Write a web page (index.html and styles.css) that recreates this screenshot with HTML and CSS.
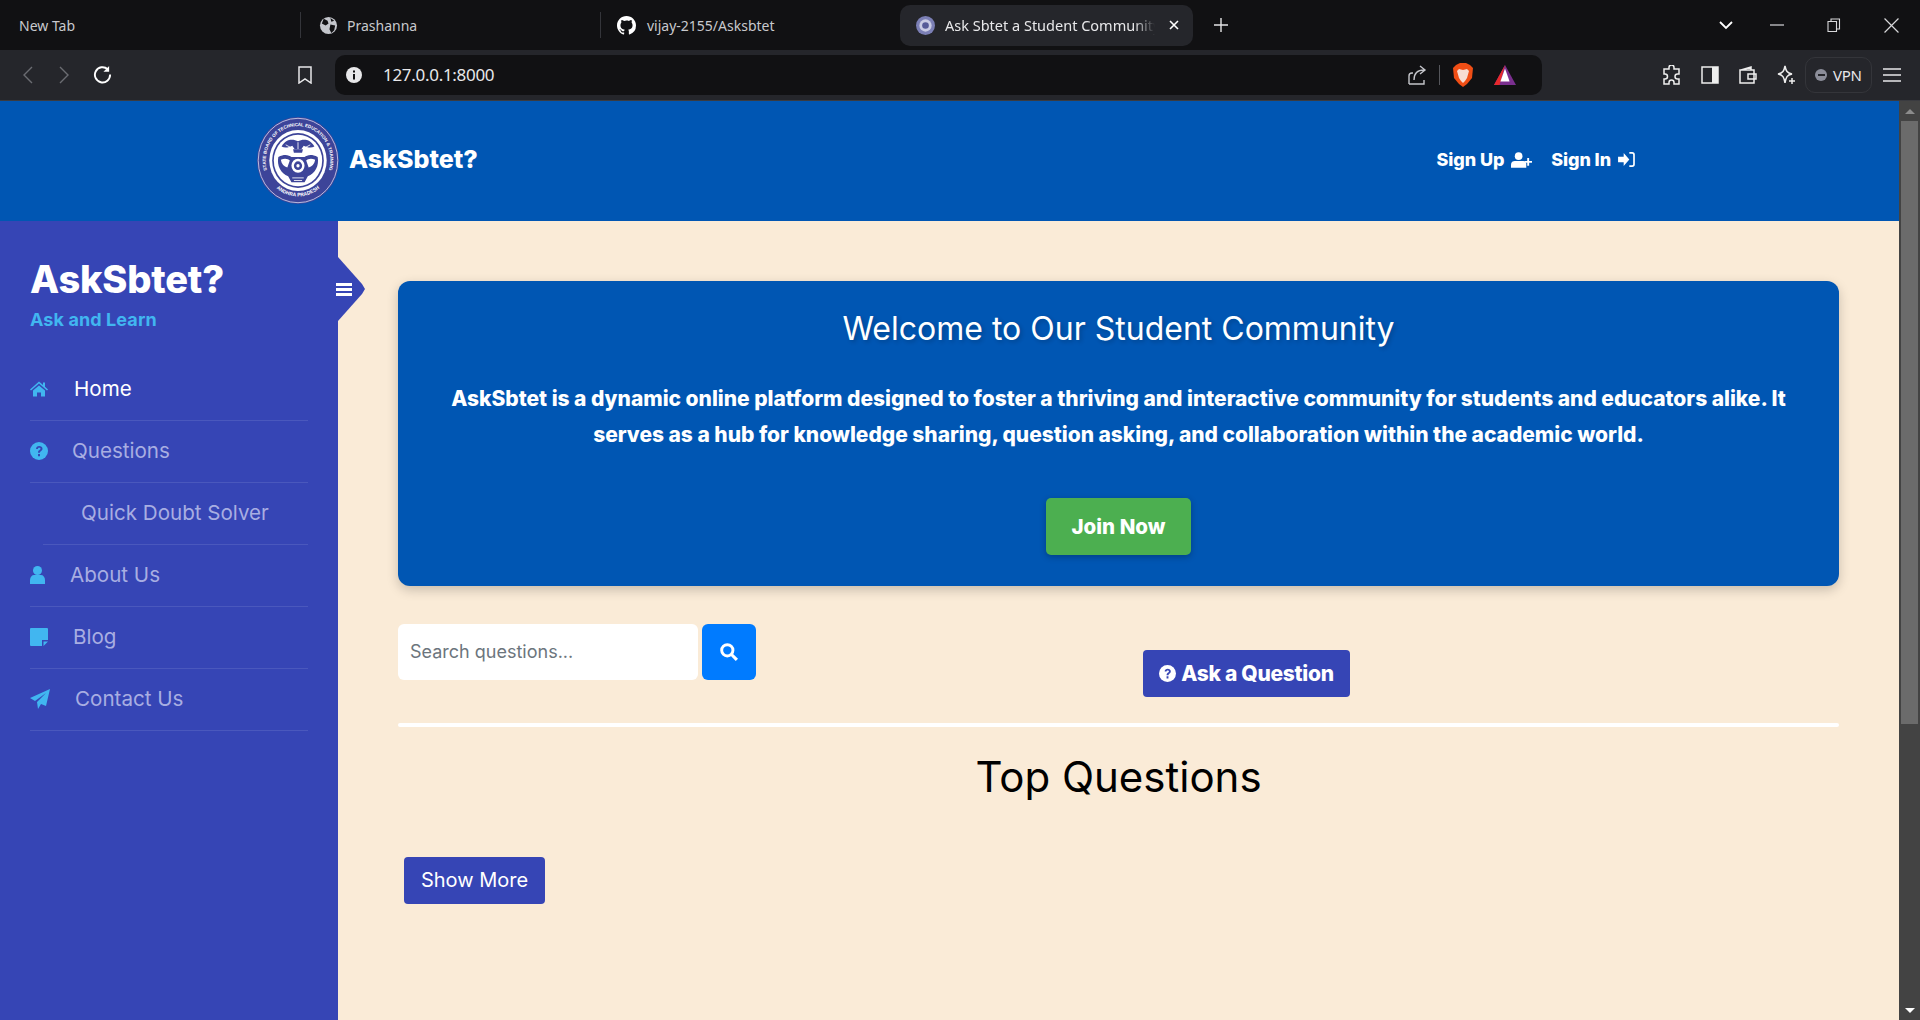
FILE: index.html
```html
<!DOCTYPE html>
<html lang="en">
<head>
<meta charset="utf-8">
<title>Ask Sbtet a Student Community</title>
<link rel="stylesheet" href="styles.css">
</head>
<body>
<div class="tabstrip">
  <div class="tab tab-first"><span>New Tab</span></div>
  <div class="tab tab-sep"><svg class="fav" viewBox="0 0 20 20"><circle cx="10" cy="10" r="9" fill="#c4c6cc"/><path d="M5 3l4 2 1 3-3 2-4-2zM12 9l5 1-1 5-3 3-2-4zM12 2l4 3-3 1z" fill="#111113"/></svg><span>Prashanna</span></div>
  <div class="tab tab-sep"><svg class="fav fav-gh" viewBox="0 0 16 16"><path fill="#fff" d="M8 0C3.58 0 0 3.58 0 8c0 3.54 2.29 6.53 5.47 7.59.4.07.55-.17.55-.38v-1.34c-2.23.48-2.7-1.07-2.7-1.07-.36-.92-.89-1.17-.89-1.17-.73-.5.05-.49.05-.49.8.06 1.23.83 1.23.83.71 1.22 1.87.87 2.33.66.07-.52.28-.87.5-1.07-1.78-.2-3.64-.89-3.64-3.95 0-.87.31-1.59.82-2.15-.08-.2-.36-1.02.08-2.12 0 0 .67-.21 2.2.82A7.6 7.6 0 0 1 8 3.88c.68 0 1.36.09 2 .27 1.53-1.04 2.2-.82 2.2-.82.44 1.1.16 1.92.08 2.12.51.56.82 1.27.82 2.15 0 3.07-1.87 3.75-3.65 3.95.29.25.54.73.54 1.48v2.19c0 .21.15.46.55.38A8 8 0 0 0 16 8c0-4.42-3.58-8-8-8z"/></svg><span>vijay-2155/Asksbtet</span></div>
  <div class="tab tab-active">
    <svg class="fav" viewBox="0 0 20 20"><circle cx="10" cy="10" r="10" fill="#7b7fb5"/><circle cx="10" cy="10" r="6.5" fill="#c9cbe4"/><circle cx="10" cy="10" r="3.5" fill="#555a98"/></svg>
    <span class="tab-title">Ask Sbtet a Student Community</span>
    <svg class="tab-close" viewBox="0 0 10 10"><path d="M1 1l8 8M9 1l-8 8" stroke="#fff" stroke-width="1.6"/></svg>
  </div>
  <svg class="newtab" viewBox="0 0 14 14"><path d="M7 0v14M0 7h14" stroke="#e4e4e6" stroke-width="1.4"/></svg>
  <div class="winctl">
    <svg class="win-chev" viewBox="0 0 14 9"><path d="M1 1l6 6 6-6" fill="none" stroke="#fff" stroke-width="1.8"/></svg>
    <svg class="win-min" viewBox="0 0 14 2"><path d="M0 1h14" stroke="#d8d8da" stroke-width="1.2"/></svg>
    <svg class="win-max" viewBox="0 0 14 14"><path d="M1 3.5h8.5v10H1zM4 3.5V1h8.500v10h-3" fill="none" stroke="#d8d8da" stroke-width="1.100"/></svg>
    <svg class="win-close" viewBox="0 0 14 14"><path d="M.5.5l13 13M13.500.5l-13 13" stroke="#d8d8da" stroke-width="1.100"/></svg>
  </div>
</div>

<div class="toolbar">
  <div class="nav-left">
    <svg class="tool-back" viewBox="0 0 10 18"><path d="M9 1L1 9l8 8" fill="none" stroke="#6b6c72" stroke-width="1.4"/></svg>
    <svg class="tool-fwd" viewBox="0 0 10 18"><path d="M1 1l8 8-8 8" fill="none" stroke="#6b6c72" stroke-width="1.4"/></svg>
    <svg class="tool-reload" viewBox="0 0 20 20"><path d="M15.500 4.500A8 8 0 1 0 18 10" fill="none" stroke="#fff" stroke-width="2"/><path d="M17 1v6h-6z" fill="#fff"/></svg>
    <svg class="tool-mark" viewBox="0 0 14 18"><path d="M1 1h12v16l-6-4-6 4z" fill="none" stroke="#e8e8ea" stroke-width="1.500"/></svg>
  </div>
  <div class="urlbar">
    <svg class="url-info" viewBox="0 0 16 16"><circle cx="8" cy="8" r="8" fill="#e8e8ea"/><path d="M7 7h2v5.500H7zM7 3.500h2v2H7z" fill="#111113"/></svg>
    <span class="url-text">127.0.0.1:8000</span>
    <span class="url-space"></span>
    <svg class="url-share" viewBox="0 0 20 20"><path d="M1 19V11a3 3 0 0 1 3-3h1M1 19h15v-4" fill="none" stroke="#c4c5ca" stroke-width="1.400"/><path d="M6 15C6 8 10 5 16 5M12 1l5 4-5 4" fill="none" stroke="#c4c5ca" stroke-width="1.400"/></svg>
    <span class="url-sep"></span>
    <svg class="url-brave" viewBox="0 0 20 24"><path d="M3 2l4-2h6l4 2 3 3-1 10-5 6-4 3-4-3-5-6L0 5z" fill="#f04e15"/><path d="M6 6l4 1 4-1 2 2-2 7-2 3-2 2-2-2-2-3-2-7z" fill="#f7ddd2"/></svg>
    <svg class="url-tri" viewBox="0 0 24 24"><path d="M12 1l12 22H0z" fill="#7a2f8f"/><path d="M12 1L0 23h6z" fill="#e8292c"/><path d="M12 5l5 14H7z" fill="#fff"/></svg>
  </div>
  <div class="nav-right">
    <svg class="ext-puzzle" viewBox="0 0 20 20"><path d="M7 2.500a2.500 2.500 0 0 1 5 0V4h5v5h-1.500a2.500 2.500 0 0 0 0 5H17v5h-5v-1.500a2.500 2.500 0 0 0-5 0V19H2v-5h1a2.500 2.500 0 0 0 0-5H2V4h5z" fill="none" stroke="#eee" stroke-width="1.500"/></svg>
    <svg class="ext-side" viewBox="0 0 18 18"><rect x="1" y="1" width="16" height="16" fill="none" stroke="#eee" stroke-width="1.500"/><rect x="11" y="1" width="6" height="16" fill="#eee"/></svg>
    <svg class="ext-wallet" viewBox="0 0 18 18"><path d="M2 4l10-3v3M1 4h14v13H1zM9 8h8v5H9z" fill="none" stroke="#eee" stroke-width="1.500"/></svg>
    <svg class="ext-star" viewBox="0 0 20 20"><path d="M9 1c1 5 2 7 7 8-5 1-6 3-7 9-1-6-2-8-7-9 5-1 6-3 7-8z" fill="none" stroke="#eee" stroke-width="1.500"/><path d="M16 13v6M13 16h6" stroke="#eee" stroke-width="1.500"/></svg>
    <div class="vpn"><span class="vpn-dot"></span><span>VPN</span></div>
    <svg class="ext-menu" viewBox="0 0 18 14"><path d="M0 1h18M0 7h18M0 13h18" stroke="#e8e8ea" stroke-width="1.500"/></svg>
  </div>
</div>

<div class="viewport">
  <div class="page">
    <header class="site-header">
      <a class="brand">
        <svg class="logo" viewBox="0 0 100 100" preserveAspectRatio="none">
          <defs>
            <path id="arcTop" d="M15 68A39.400 39.400 0 1 1 85 68"/>
            <path id="arcBot" d="M18 76A41 41 0 0 0 82 76"/>
          </defs>
          <circle cx="50" cy="50" r="50" fill="#3d4499"/>
          <circle cx="50" cy="50" r="48.500" fill="none" stroke="#cfd1ea" stroke-width="1"/>
          <text class="logo-text"><textPath href="#arcTop" startOffset="50%" text-anchor="middle">STATE BOARD OF TECHNICAL EDUCATION &amp; TRAINING</textPath></text>
          <text class="logo-text logo-text-bot"><textPath href="#arcBot" startOffset="50%" text-anchor="middle">ANDHRA PRADESH</textPath></text>
          <circle cx="50" cy="50" r="35" fill="#fff"/>
          <circle cx="50" cy="50" r="31.500" fill="#3d4499"/>
          <circle cx="50" cy="50" r="29.500" fill="#fff"/>
          <path d="M30 34c5-9 14-9 20-6 6-3 15-3 20 6-4 2-9 1-13-1l-3 4H46l-3-4c-4 2-9 3-13 1z" fill="#3d4499"/>
          <path d="M35 32l10 5M65 32l-10 5M50 29v8" stroke="#fff" stroke-width="1"/>
          <path d="M44 37h12l-1 4H45z" fill="#3d4499"/>
          <path d="M26 46c8-4 13-2 16 0h16c3-2 8-4 16 0 2 10-3 19-12 22l-4 7H42l-4-7c-9-3-14-12-12-22z" fill="#3d4499"/>
          <path d="M29 49c5-2 9-1 11 1l-3 8c-4-1-7-4-8-9zM71 49c-5-2-9-1-11 1l3 8c4-1 7-4 8-9z" fill="#fff"/>
          <circle cx="50" cy="56" r="8" fill="#fff"/>
          <circle cx="50" cy="56" r="5" fill="#3d4499"/>
          <circle cx="50" cy="56" r="2" fill="#fff"/>
          <path d="M43 70h14M45 73h10" stroke="#fff" stroke-width="1"/>
        </svg>
        <span class="brand-name">AskSbtet?</span>
      </a>
      <nav class="auth">
        <a class="auth-link auth-up">Sign Up
          <svg class="auth-ico-up" viewBox="0 0 22 16"><circle cx="8" cy="4" r="4" fill="#fff"/><path d="M0 16v-3c0-3 2-4 4-4h8c2 0 4 1 4 3v4z" fill="#fff"/><path d="M18 6v8M14 10h8" stroke="#fff" stroke-width="2" fill="none"/></svg>
        </a>
        <a class="auth-link">Sign In
          <svg class="auth-ico-in" viewBox="0 0 18 16"><path d="M0 5h6V1l6 7-6 7v-4H0z" fill="#fff"/><path d="M12 1h3c1.500 0 2 1 2 2v10c0 1-.5 2-2 2h-3" fill="none" stroke="#fff" stroke-width="1.800"/></svg>
        </a>
      </nav>
    </header>

    <div class="content-row">
      <aside class="sidebar">
        <h1 class="side-title">AskSbtet?</h1>
        <p class="side-sub">Ask and Learn</p>
        <ul class="side-nav">
          <li class="side-item active">
            <svg class="ico-home" viewBox="0 0 18 15"><path d="M9 0l4 3.500V1h2v4.200L18 8l-1 1-8-7-8 7-1-1zM3 9l6-5 6 5v6h-4v-4H7v4H3z" fill="#41b6f0"/></svg>
            <span>Home</span>
          </li>
          <li class="side-item">
            <svg class="ico-q" viewBox="0 0 18 18"><circle cx="9" cy="9" r="9" fill="#41b6f0"/><path d="M6 7c0-2 1.500-3 3.200-3C11 4 12.500 5 12.500 6.800c0 2.200-2.500 2.200-2.500 4H8c0-2.800 2.500-2.800 2.500-4 0-.6-.6-1-1.300-1-.8 0-1.200.5-1.300 1.200zM8 12h2v2.200H8z" fill="#3645b5"/></svg>
            <span>Questions</span>
          </li>
          <li class="side-item side-item-indent"><span>Quick Doubt Solver</span></li>
          <li class="side-item">
            <svg class="ico-user" viewBox="0 0 15 18"><circle cx="7.500" cy="4.500" r="4.500" fill="#41b6f0"/><path d="M0 18v-4c0-3 2-5 4-5h7c2 0 4 2 4 5v4z" fill="#41b6f0"/></svg>
            <span>About Us</span>
          </li>
          <li class="side-item">
            <svg class="ico-note" viewBox="0 0 18 18"><path d="M1 0h16a1 1 0 0 1 1 1v11h-6v6H1a1 1 0 0 1-1-1V1a1 1 0 0 1 1-1zM13.500 18v-4.500H18z" fill="#41b6f0"/></svg>
            <span>Blog</span>
          </li>
          <li class="side-item">
            <svg class="ico-plane" viewBox="0 0 20 20"><path d="M20 0L16 17l-5-2-3 5-1-7 9-9-11 8-5-3z" fill="#41b6f0"/></svg>
            <span>Contact Us</span>
          </li>
        </ul>
        <button class="side-toggle" aria-label="Toggle menu">
          <svg viewBox="0 0 16 13"><path d="M0 0h16v3H0zM0 5h16v3H0zM0 10h16v3H0z" fill="#fff"/></svg>
        </button>
      </aside>

      <main class="main">
        <section class="hero">
          <h2 class="hero-title">Welcome to Our Student Community</h2>
          <p class="hero-text">AskSbtet is a dynamic online platform designed to foster a thriving and interactive community for students and educators alike. It serves as a hub for knowledge sharing, question asking, and collaboration within the academic world.</p>
          <a class="join">Join Now</a>
        </section>

        <div class="action-row">
          <form class="search">
            <input class="search-input" type="text" placeholder="Search questions...">
            <button class="search-btn" type="button" aria-label="Search"><svg viewBox="0 0 16 16"><circle cx="6.500" cy="6.500" r="5" fill="none" stroke="#fff" stroke-width="2.600"/><path d="M10 10l5 5" stroke="#fff" stroke-width="2.800"/></svg></button>
          </form>
          <a class="ask">
            <svg viewBox="0 0 18 18"><circle cx="9" cy="9" r="9" fill="#fff"/><path d="M6 7c0-2 1.500-3 3.200-3C11 4 12.500 5 12.500 6.800c0 2.200-2.500 2.200-2.500 4H8c0-2.800 2.500-2.800 2.500-4 0-.6-.6-1-1.300-1-.8 0-1.200.5-1.300 1.200zM8 12h2v2.200H8z" fill="#3645b5"/></svg>
            Ask a Question
          </a>
        </div>
        <hr class="rule">
        <h2 class="top-title">Top Questions</h2>
        <a class="more">Show More</a>
      </main>
    </div>
  </div>
  <div class="scrollbar">
    <div class="sb-btn"><span class="sb-up"></span></div>
    <div class="sb-thumb"></div>
    <div class="sb-track"></div>
    <div class="sb-btn"><span class="sb-down"></span></div>
  </div>
</div>
</body>
</html>
```

FILE: styles.css
```css
* { box-sizing: border-box; }
html, body { margin: 0; height: 100%; overflow: hidden; }
body { display: flex; flex-direction: column; font-family: "Inter", "Liberation Sans", sans-serif; background: #faebd7; }
svg { display: block; flex: none; }

/* browser chrome */
.tabstrip { height: 50px; flex: none; background: #111113; display: flex; align-items: center; font: 14px "Noto Sans", "Open Sans", sans-serif; color: #c8c9cd; }
.tab { width: 300px; height: 26px; display: flex; align-items: center; }
.tab-first { padding-left: 19px; }
.tab-sep { border-left: 1px solid #34353a; padding-left: 18px; gap: 9px; }
.fav { width: 19px; height: 19px; }
.fav-gh { margin: 0 2px 0 -2px; }
.tab-active { width: 293px; height: 41px; background: #25262b; border-radius: 10px; padding-left: 16px; gap: 10px; color: #e8e8ea; }
.tab-title { width: 210px; font-size: 14.500px; white-space: nowrap; overflow: hidden; -webkit-mask-image: linear-gradient(to right, #000 90%, transparent); mask-image: linear-gradient(to right, #000 90%, transparent); }
.tab-close { width: 10px; height: 10px; margin-left: 4px; }
.newtab { width: 14px; height: 14px; margin-left: 21px; }
.winctl { margin-left: auto; display: flex; align-items: center; padding-right: 21px; }
.win-chev { width: 14px; height: 9px; margin-right: 37px; }
.win-min { width: 14px; height: 2px; margin-right: 43px; }
.win-max { width: 14px; height: 14px; margin-right: 43px; }
.win-close { width: 15px; height: 15px; }

.toolbar { height: 51px; flex: none; background: #25262b; border-bottom: 1px solid #3a3b40; display: flex; align-items: center; padding-bottom: 1px; }
.nav-left { width: 335px; display: flex; align-items: center; padding-left: 23px; }
.tool-back, .tool-fwd { width: 10px; height: 18px; }
.tool-fwd { margin-left: 26px; }
.tool-reload { width: 19px; height: 19px; margin-left: 24px; }
.tool-mark { width: 14px; height: 18px; margin-left: 186px; }
.urlbar { width: 1207px; height: 40px; background: #111113; border-radius: 10px; display: flex; align-items: center; padding-left: 11px; }
.url-info { width: 16px; height: 16px; }
.url-text { margin-left: 21px; font: 17px "Noto Sans", sans-serif; color: #e8e8ea; letter-spacing: -.3px; }
.url-space { flex: 1; }
.url-share { width: 20px; height: 20px; }
.url-sep { width: 1px; height: 20px; background: #55565b; margin: 0 13px 0 11px; }
.url-brave { width: 20px; height: 24px; }
.url-tri { width: 24px; height: 22px; margin: 0 25px 0 20px; }
.nav-right { flex: 1; display: flex; align-items: center; padding-left: 120px; }
.ext-puzzle { width: 20px; height: 20px; }
.ext-side { width: 18px; height: 18px; margin-left: 19px; }
.ext-wallet { width: 18px; height: 18px; margin-left: 20px; }
.ext-star { width: 20px; height: 20px; margin-left: 19px; }
.vpn { width: 67px; height: 36px; margin-left: 9px; border: 1px solid #34353a; border-radius: 10px; display: flex; align-items: center; gap: 6px; padding-left: 9px; font: 15px "Noto Sans", sans-serif; color: #e8e8ea; letter-spacing: -.3px; }
.vpn-dot { width: 12px; height: 12px; border-radius: 50%; background: linear-gradient(#25262b, #25262b) center / 7px 2px no-repeat, #8c8e9a; flex: none; }
.ext-menu { width: 18px; height: 14px; margin-left: 11px; }

/* page */
.viewport { flex: 1; min-height: 0; display: flex; }
.page { flex: 1; min-width: 0; display: flex; flex-direction: column; }
.site-header { height: 120px; flex: none; background: #0056b3; display: flex; align-items: center; padding-left: 257px; padding-right: 264px; justify-content: space-between; }
.brand { display: flex; align-items: center; gap: 10px; margin-top: -2px; }
.logo { width: 82px; height: 87px; }
.logo-text { font: 700 5.400px "Liberation Sans", sans-serif; fill: #fff; }
.logo-text-bot { font-size: 6px; }
.brand-name { font-size: 25px; font-weight: 800; color: #fff; margin-top: -2px; }
.auth { display: flex; gap: 19px; margin-top: -3px; }
.auth-link { display: flex; align-items: center; gap: 7px; font-size: 18px; font-weight: 800; color: #fff; letter-spacing: -.1px; }
.auth-ico-up { width: 21px; height: 16px; }
.auth-ico-in { width: 17px; height: 15px; }

.content-row { flex: 1; min-height: 0; display: flex; }
.sidebar { width: 338px; flex: none; background: #3645b5; padding: 36px 30px 0; position: relative; }
.side-title { margin: 0; font-size: 38px; line-height: 44px; font-weight: 800; color: #fff; letter-spacing: -.2px; }
.side-sub { margin: 4px 0 0; font-size: 18px; line-height: 30px; font-weight: 700; color: #41b6f0; letter-spacing: .1px; }
.side-nav { list-style: none; margin: 24px 0 0; padding: 0; }
.side-item { height: 62px; display: flex; align-items: center; border-bottom: 1px solid #4a58bd; font-size: 20.600px; color: #a8aee2; padding-bottom: 2px; }
.side-item.active { color: #fff; }
.side-item-indent { margin-left: 13px; padding-left: 38px; }
.ico-home { width: 18px; height: 16px; margin-right: 26px; }
.ico-q { width: 18px; height: 18px; margin-right: 24px; }
.ico-user { width: 15px; height: 18px; margin-right: 25px; }
.ico-note { width: 18px; height: 18px; margin-right: 25px; }
.ico-plane { width: 20px; height: 20px; margin-right: 25px; }
.side-toggle { position: absolute; left: 100%; top: 36px; width: 27px; height: 64px; padding: 0; border: 0; background: none; }
.side-toggle::before { content: ""; position: absolute; inset: 0; background: #3645b5; clip-path: polygon(0 0, 24px 27px, 27px 32px, 24px 37px, 0 64px); }
.side-toggle svg { position: absolute; left: -2px; top: 26px; width: 16px; height: 13px; z-index: 1; }

.main { flex: 1; min-width: 0; padding: 60px 60px 0; }
.hero { height: 305px; background: #0056b3; border-radius: 12px; box-shadow: 0 4px 12px rgba(0,0,0,.2); text-align: center; padding-top: 29px; color: #fff; }
.hero-title { margin: 0; font-size: 32px; line-height: 38px; font-weight: 400; text-shadow: 2px 2px 4px rgba(0,0,0,.2); }
.hero-text { width: 1380px; margin: 33px auto 0; font-size: 21px; line-height: 36px; font-weight: 800; letter-spacing: -.03px; }
.join { display: block; width: 145px; height: 57px; margin: 45px auto 0; border-radius: 5px; background: #4caf50; color: #fff; font-size: 20.500px; font-weight: 800; line-height: 57px; box-shadow: 0 2px 6px rgba(0,0,0,.25); }

.action-row { height: 73px; display: flex; align-items: flex-end; margin-top: 38px; }
.search { display: flex; gap: 4px; align-self: flex-start; }
.search-input { width: 300px; height: 56px; border: 0; border-radius: 6px; background: #fff; padding: 0 12px 2px; font: 18px "Inter", sans-serif; outline: 0; }
.search-input::placeholder { color: #6c757d; opacity: 1; }
.search-btn { width: 54px; height: 56px; border: 0; padding: 0; border-radius: 6px; background: #007bff; display: flex; align-items: center; justify-content: center; }
.search-btn svg { width: 18px; height: 18px; }
.ask { margin-left: 387px; width: 207px; height: 47px; background: #3645b5; border-radius: 4px; color: #fff; display: flex; align-items: center; justify-content: center; gap: 5px; font-size: 21px; font-weight: 800; letter-spacing: -.3px; }
.ask svg { width: 17px; height: 17px; }
.rule { height: 4px; margin: 26px 0 0; border: 0; border-radius: 2px; background: #fff; }
.top-title { margin: 26px 0 0; text-align: center; font-size: 42px; line-height: 48px; font-weight: 400; color: #000; }
.more { display: block; width: 141px; height: 47px; margin: 56px 0 0 6px; background: #3645b5; border-radius: 4px; color: #fff; font-size: 20px; line-height: 47px; text-align: center; }

.scrollbar { width: 21px; flex: none; background: #434343; border-left: 2px solid #434343; display: flex; flex-direction: column; padding-right: 2px; }
.sb-btn { height: 20px; display: flex; align-items: center; justify-content: center; flex: none; }
.sb-up { border: 5px solid transparent; border-top: 0; border-bottom: 5px solid #8c8c8c; }
.sb-down { border: 5px solid transparent; border-bottom: 0; border-top: 5px solid #fff; }
.sb-thumb { height: 603px; background: #6b6b6b; flex: none; }
.sb-track { flex: 1; }
```
